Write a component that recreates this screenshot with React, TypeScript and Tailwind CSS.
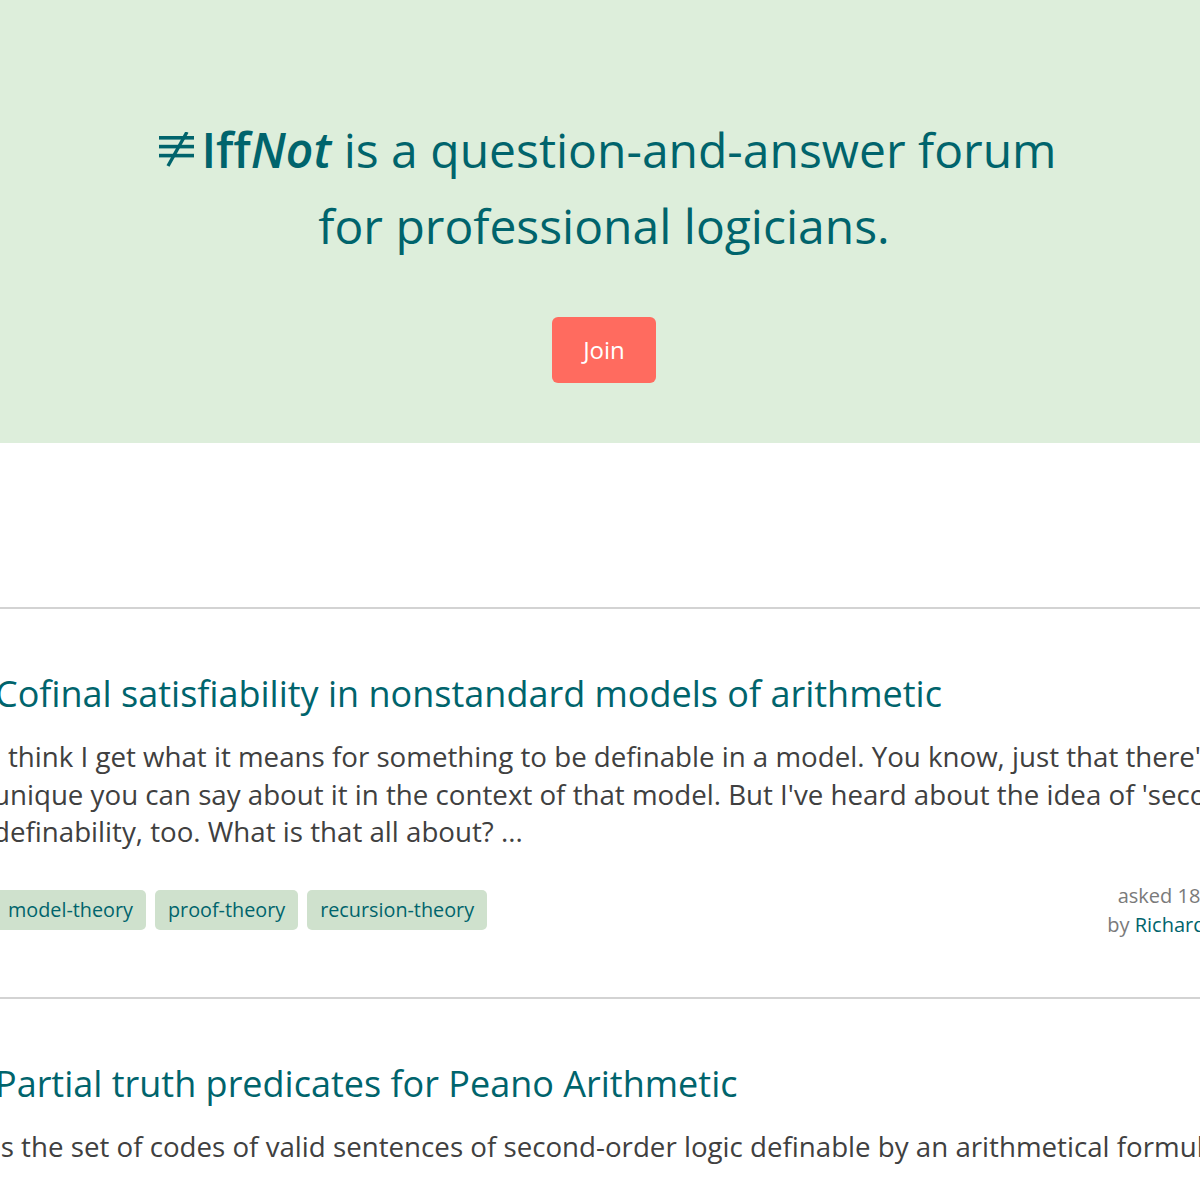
import React from "react";

const TEAL = "text-[#00646c]";

function NotEquivLogo() {
  return (
    <svg width="37" height="40" viewBox="0 0 37 40" className="inline-block align-baseline ml-[6px] mr-[7px]" style={{ marginBottom: "-4px" }}>
      <rect x="2" y="4" width="35" height="3.6" fill="#00646c" />
      <rect x="2" y="12.8" width="35" height="3.6" fill="#00646c" />
      <rect x="2" y="21.8" width="35" height="3.6" fill="#00646c" />
      <line x1="30" y1="0" x2="11" y2="34" stroke="#00646c" strokeWidth="3.4" />
    </svg>
  );
}

type Q = {
  title: string;
  body: React.ReactNode;
  tags: string[];
};

function Question({ q }: { q: Q }) {
  return (
    <div className="border-t-2 border-[#d3d3d3] pt-[60px] pb-[58.5px]">
      <div className="ml-[-5px] w-[1304px]">
        <h2 className={`text-[36px] leading-[50px] ${TEAL} font-normal whitespace-nowrap`}>{q.title}</h2>
        <p className="mt-[19px] ml-[-2px] text-[27.7px] leading-[37.5px] text-[#404040] whitespace-nowrap">{q.body}</p>
        <div className="mt-[30px] flex items-center justify-between">
          <div className="flex gap-[9px]">
            {q.tags.map((t) => (
              <span key={t} className={`h-[40px] px-[13px] flex items-center rounded-[5px] bg-[#cfe1cd] text-[19.8px] ${TEAL}`}>
                {t}
              </span>
            ))}
          </div>
          <div className="text-right text-[20px] leading-[29px] text-[#7a7a7a]">
            <div>asked 18 hours ago</div>
            <div>
              by <span className={TEAL}>Richard Pettigrew</span>
            </div>
          </div>
        </div>
      </div>
    </div>
  );
}

export default function App() {
  const questions: Q[] = [
    {
      title: "Cofinal satisfiability in nonstandard models of arithmetic",
      body: (
        <>
          I think I get what it means for something to be definable in a model. You know, just that there's something
          <br />
          unique you can say about it in the context of that model. But I've heard about the idea of 'second-order
          <br />
          definability, too. What is that all about? ...
        </>
      ),
      tags: ["model-theory", "proof-theory", "recursion-theory"],
    },
    {
      title: "Partial truth predicates for Peano Arithmetic",
      body: <>Is the set of codes of valid sentences of second-order logic definable by an arithmetical formula? ...</>,
      tags: ["arithmetic", "truth", "second-order-logic"],
    },
  ];

  return (
    <div className="w-[1200px] overflow-hidden bg-white" style={{ fontFamily: '"Open Sans", "Noto Sans", sans-serif' }}>
      <section className="h-[443px] bg-[#ddeedb] flex flex-col items-center pt-[112px]">
        <h1 className={`text-[48px] leading-[76px] ${TEAL} font-normal text-center pl-[8px]`}>
          <span className="whitespace-nowrap">
            <NotEquivLogo />
            <span className="font-semibold">Iff</span>
            <span className="font-semibold italic">Not</span> is a question-and-answer forum
          </span>
          <br />
          for professional logicians.
        </h1>
        <button className="mt-[53px] w-[104px] h-[66px] rounded-[6px] bg-[#ff6b5f] text-white text-[24px] ml-[8px]">
          Join
        </button>
      </section>
      <div className="h-[164px]" />
      {questions.map((q) => (
        <Question key={q.title} q={q} />
      ))}
    </div>
  );
}
